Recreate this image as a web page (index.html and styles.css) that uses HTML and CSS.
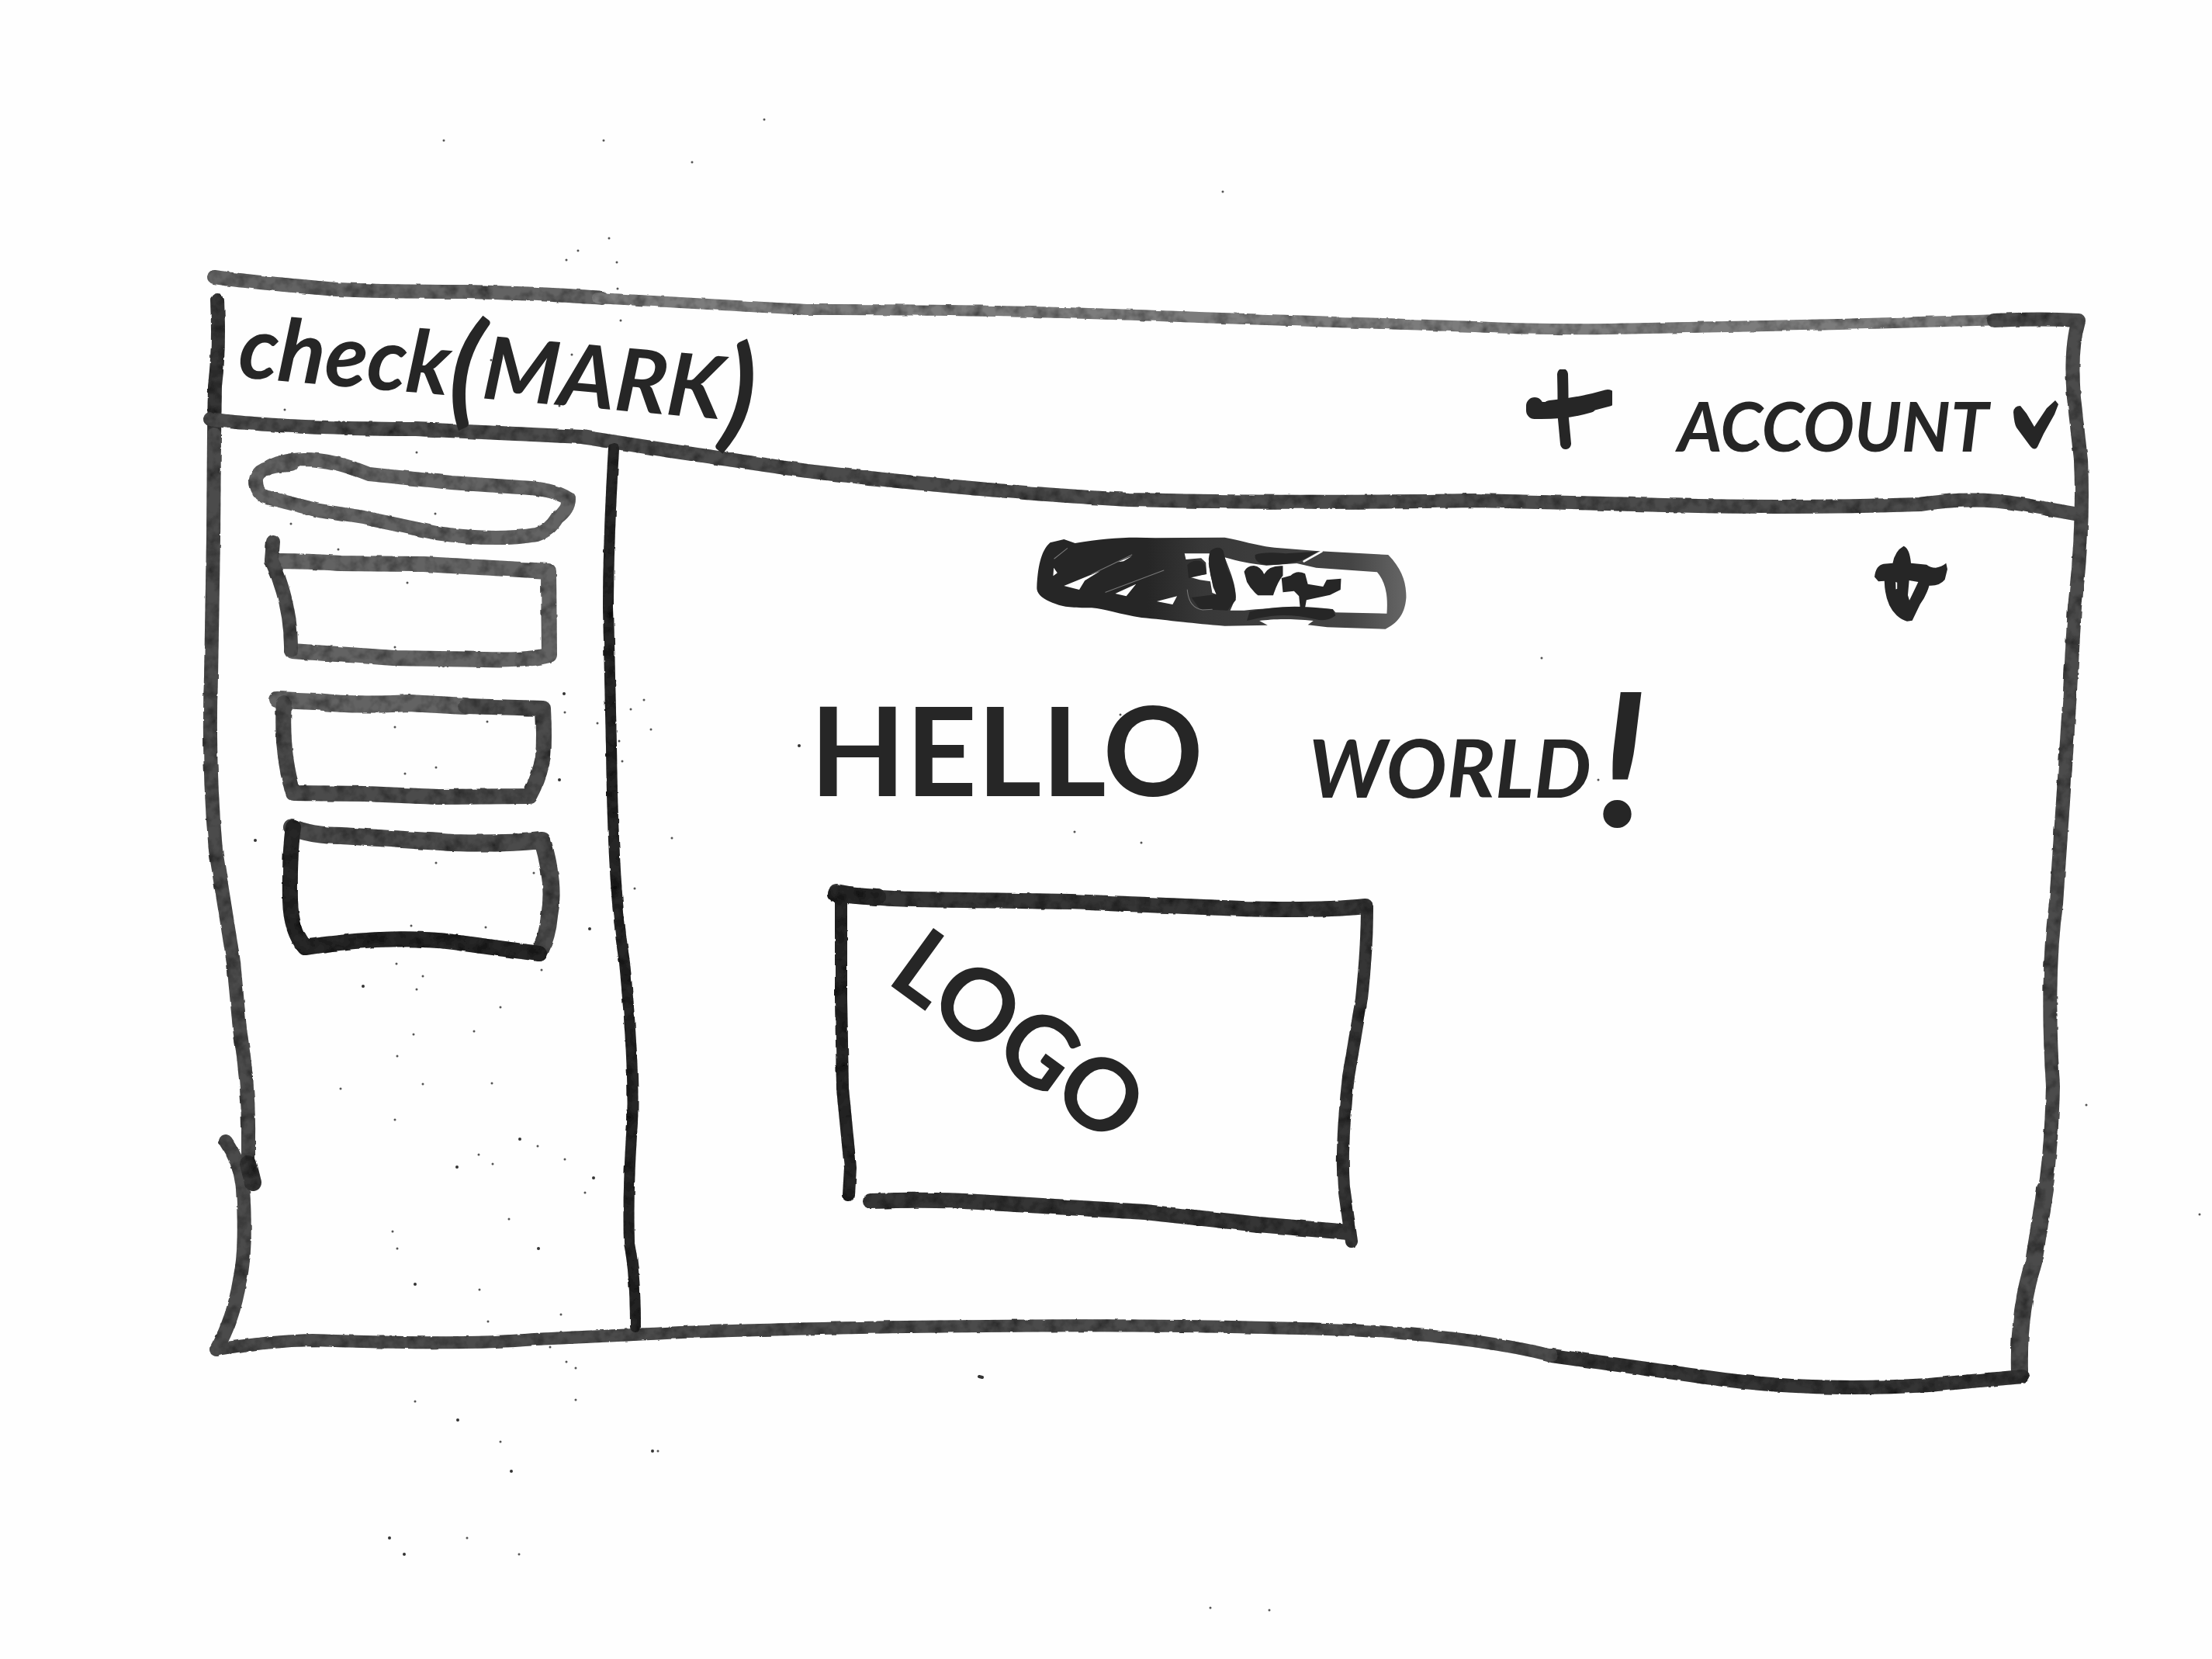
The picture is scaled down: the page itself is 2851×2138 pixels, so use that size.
FILE: index.html
```
<!DOCTYPE html>
<html lang="en">
<head>
<meta charset="utf-8">
<meta name="viewport" content="width=device-width, initial-scale=1">
<title>check(MARK)</title>
<link rel="stylesheet" href="styles.css">
</head>
<body>
<!-- paper grain -->
<svg class="specks" viewBox="0 0 2851 2138" preserveAspectRatio="none" aria-hidden="true">
  <path class="speck" d="M778 181h0M985 154h0M892 209h0M1576 247h0M785 307h0M745 323h0M730 335h0M796 372h0M800 413h0M795 338h0M848 1870h0M633 464h0M737 457h0M721 523h0M367 528h0M537 583h0M561 662h0M375 675h0M436 708h0M525 751h0M509 834h0M728 918h0M770 932h0M628 930h0M830 902h0M813 914h0M839 940h0M798 955h0M802 981h0M509 937h0M562 989h0M522 997h0M562 1112h0M530 1193h0M626 1195h0M688 1125h0M818 1145h0M511 1242h0M545 1258h0M698 1250h0M537 1275h0M645 1298h0M611 1329h0M533 1333h0M512 1361h0M439 1403h0M545 1397h0M634 1396h0M509 1443h0M693 1477h0M617 1488h0M635 1500h0M728 1494h0M754 1537h0M656 1571h0M506 1587h0M512 1609h0M618 1662h0M723 1694h0M629 1703h0M709 1736h0M730 1755h0M742 1763h0M535 1806h0M1385 1072h0M1471 1086h0M1444 921h0M1987 848h0M2060 1005h0M2689 1424h0M645 1858h0M602 1982h0M742 1804h0M1560 2072h0M1636 2075h0M2835 1565h0M669 2003h0M572 181h0M866 1080h0"/>
  <path class="speck speck--large" d="M329 1083h0M727 894h0M721 1005h0M760 1197h0M468 1271h0M670 1468h0M589 1504h0M765 1518h0M694 1609h0M535 1655h0M1030 961h0M841 1870h0M659 1896h0M502 1982h0M521 2003h0M590 1830h0M1262 1774l4 1"/>
</svg>

<div class="window">
  <svg class="ink" viewBox="264 352 2427 1440" preserveAspectRatio="none" aria-hidden="true">
    <defs>
      <filter id="marker" filterUnits="userSpaceOnUse" x="200" y="300" width="2600" height="1600">
        <feTurbulence type="fractalNoise" baseFrequency="0.06" numOctaves="3" seed="4" result="n"/>
        <feDisplacementMap in="SourceGraphic" in2="n" scale="3" xChannelSelector="R" yChannelSelector="G" result="edge"/>
        <feColorMatrix in="n" values="0 0 0 0 0  0 0 0 0 0  0 0 0 0 0  1.4 0 0 0 -0.55" result="shade"/>
        <feComposite in="shade" in2="edge" operator="in" result="mottle"/>
        <feMerge><feMergeNode in="edge"/><feMergeNode in="mottle"/></feMerge>
      </filter>
    </defs>
    <g filter="url(#marker)">
      <path class="s18 pale" d="M276 357Q316 363 434 373Q500 376 597 376Q700 378 776 384"/>
      <path class="s14 faint" d="M770 384Q903 391 1040 399Q1273 398 1545 409L1900 421Q1980 425 2073 424L2371 418L2580 412"/>
      <path class="s18 mid" d="M2570 413Q2630 410 2679 413Q2668 450 2673 513L2682 593Q2686 680 2674 782"/>
      <path class="s18 mid" d="M2674 782Q2668 900 2660 1018L2650 1164Q2637 1260 2646 1400Q2644 1480 2636 1533"/>
      <path class="s22 mid" d="M2636 1533L2621 1627Q2601 1690 2603 1767"/>
      <path class="s18 dark" d="M2607 1774L2486 1785Q2330 1794 2200 1775L2000 1747"/>
      <path class="s16 mid" d="M2000 1747Q1900 1722 1740 1714Q1500 1706 1273 1709Q1091 1710 880 1717L689 1726Q600 1734 403 1727Q350 1728 279 1739"/>
      <path class="s18 dark" d="M280 387Q283 450 277 497L276 563"/>
      <path class="s18 mid" d="M276 560L275 694L272 872Q268 984 278 1096L301 1240L309 1326Q321 1400 320 1464L320 1500"/>
      <path class="s18 mid" d="M291 1471Q311 1500 313 1533Q318 1610 309 1650Q301 1700 279 1739"/>
      <path class="s22 dark" d="M320 1500L326 1524"/>
      <path class="s18 mid" d="M271 540Q300 545 393 550Q460 553 536 553L750 563L878 583L1040 607Q1273 634 1455 644Q1660 649 1900 645L2109 650Q2300 656 2475 650Q2543 639 2606 650L2674 662"/>
      <path class="s14 black" d="M791 578Q784 700 784 783L788 962Q790 1150 805 1240Q818 1378 815 1447Q809 1533 811 1602Q819 1640 819 1710"/>
    </g>
  </svg>

  <header class="topbar">
    <a class="brand" href="#">check<span class="brand__paren">(</span>MARK<span class="brand__paren">)</span></a>
    <nav class="actions">
      <button class="plain" type="button" aria-label="Add">
        <svg class="icon-plus" viewBox="1964 477 116 104" aria-hidden="true">
          <path class="s14 black" d="M2016 483Q2017 520 2016 530L2020 573"/>
          <path class="s22 black" d="M1980 524L1980 530Q2020 531 2050 522M2000 528Q2040 524 2074 514"/>
        </svg>
      </button>
      <button class="plain account" type="button">ACCOUNT
        <svg class="icon-caret" viewBox="2597 532 60 64" aria-hidden="true">
          <path class="fill" d="M2606 539Q2598 539 2597 547Q2598 562 2601 567L2618 590Q2624 598 2628 592L2636 575L2650 550L2655 537L2651 532L2640 542L2624 566L2614 549Z"/>
        </svg>
      </button>
    </nav>
  </header>

  <div class="body">
    <aside class="sidebar">
      <label class="search">
        <input class="search__input" type="search" aria-label="Search">
        <svg class="ink" viewBox="320 592 424 100" preserveAspectRatio="none" aria-hidden="true">
          <path class="s18 pale" filter="url(#marker)" d="M376 599Q332 600 330 618Q330 638 345 641L412 658L470 667L565 687Q640 698 695 689Q712 684 722 667Q737 656 737 643Q720 632 688 629L584 622L477 611Q430 592 393 592Q360 593 345 604"/>
        </svg>
      </label>
      <button class="card" type="button" aria-label="Item 1">
        <svg class="ink" viewBox="352 724 356 124" preserveAspectRatio="none" aria-hidden="true">
          <g filter="url(#marker)"><path class="s20 pale" d="M351 723Q400 723 439 726L546 727L707 736L708 844Q680 852 623 850L508 848L376 839"/><path class="s18 mid" d="M352 698L350 722Q376 780 375 838"/></g>
        </svg>
      </button>
      <button class="card" type="button" aria-label="Item 2">
        <svg class="ink" viewBox="352 904 356 124" preserveAspectRatio="none" aria-hidden="true">
          <g filter="url(#marker)"><path class="s22 pale" d="M357 902L408 904Q454 910 527 906L600 910"/><path class="s20 mid" d="M600 910L700 913Q702 950 700 975Q696 1000 682 1026L565 1027L470 1023L378 1022Q362 970 366 906"/></g>
        </svg>
      </button>
      <button class="card" type="button" aria-label="Item 3">
        <svg class="ink" viewBox="352 1084 356 124" preserveAspectRatio="none" aria-hidden="true">
          <g filter="url(#marker)"><path class="s22 mid" d="M376 1066Q400 1077 440 1077L584 1086Q650 1088 699 1083Q716 1140 708 1180Q706 1206 695 1228"/><path class="s20 black" d="M378 1066Q373 1100 374 1160Q375 1200 393 1221Q500 1204 584 1214L695 1229"/></g>
        </svg>
      </button>
    </aside>

    <main class="content">
      <div class="toolbar">
        <label class="toggle">
          <input class="toggle__input" type="checkbox" aria-label="Preview" checked>
          <svg class="toggle__art" viewBox="101 96 1344 360" preserveAspectRatio="none" aria-hidden="true">
            <defs><linearGradient id="ring"><stop offset="0.3" stop-color="#262626"/><stop offset="0.45" stop-color="#383838"/><stop offset="0.85" stop-color="#454545"/><stop offset="1" stop-color="#666"/></linearGradient></defs>
            <path fill="url(#ring)" fill-rule="evenodd" d="M150 118L200 105L240 120C350 100 430 95 530 100L780 98C860 115 900 130 960 137L1110 150L1370 165C1420 220 1435 270 1435 330C1430 400 1400 430 1360 452L1150 445L1080 436L1100 420C1000 410 950 415 905 420L935 437L780 440C650 430 560 415 480 408C400 395 350 375 300 370C230 370 200 368 170 355C130 340 100 320 102 290C105 220 115 150 150 118ZM780 175C830 190 870 200 930 206L1040 198L1110 215L1330 232C1360 270 1370 320 1365 392L1180 388L1170 375C1060 365 930 370 850 380L800 380L820 330C820 280 800 230 780 175ZM635 160L725 160L722 200L738 290L750 318L735 312L728 268L690 262L650 250L715 240L712 195L695 178L640 183ZM200 285L330 228L275 265L255 300ZM385 315L460 278L425 325ZM535 345L608 325L592 357ZM163 215L176 235L161 247ZM395 193L445 170L415 190Z"/>
            <path class="fill" d="M850 230Q860 207 885 207Q910 210 922 240Q940 205 990 208L990 245Q970 270 955 322L900 322Q875 300 860 270ZM985 255L1018 245Q1040 222 1070 238L1080 278L1135 288L1148 262L1200 257L1198 300L1160 320L1075 340L1070 370L1052 368L1048 325L1030 305L990 310ZM890 165Q920 152 1000 160L1115 152L1070 180Q1030 202 930 205Q885 195 890 165ZM870 385Q1000 350 1170 376L1180 400Q1150 425 1110 415Q1000 385 900 410L860 420ZM728 150Q760 125 775 150L790 220Q820 280 820 340L790 380L690 375L660 330L750 318Q722 240 722 180ZM645 205Q665 180 695 190Q715 200 712 240L650 255Z"/>
            <path class="scratch" d="M165 180L212 140M645 300Q650 370 700 378L735 376M300 240L445 165M350 310L560 225"/>
            <path class="scratch scratch--wide" d="M1066 190L1130 152"/>
          </svg>
        </label>
        <button class="plain favourite" type="button" aria-label="Favourite">
          <svg class="icon-heart" viewBox="108 74 284 292" aria-hidden="true">
            <path class="fill" fill-rule="evenodd" d="M110 195Q115 150 145 145L180 142Q188 95 222 76Q245 85 250 142L310 148Q325 160 345 160Q370 155 385 142L390 165L380 205Q360 230 320 228Q310 265 285 300L255 362L235 365Q215 360 195 342Q150 300 148 210L125 212ZM243 208L278 214L244 285L238 265ZM191 214L197 216L197 240L192 242Z"/>
          </svg>
        </button>
      </div>
      <h1 class="headline">HELLO <span class="headline__small">WORLD</span><span class="headline__mark">!</span></h1>
      <figure class="logo">
        <svg class="ink" viewBox="1068 1140 704 468" preserveAspectRatio="none" aria-hidden="true">
          <g filter="url(#marker)">
            <path class="s20 dark" d="M1078 1149Q1120 1158 1180 1159L1379 1162L1600 1171Q1700 1174 1760 1168"/>
            <path class="s16 black" d="M1084 1152L1084 1287L1086 1403L1096 1505L1094 1540"/>
            <path class="s22 black" d="M1078 1152L1130 1156"/>
            <path class="s20 dark" d="M1122 1548Q1200 1545 1260 1549L1476 1562L1622 1578L1738 1588"/>
            <path class="s16 dark" d="M1762 1170Q1762 1220 1755 1287L1738 1387Q1728 1480 1732 1530L1742 1600"/>
          </g>
        </svg>
        <figcaption class="logo__text">LOGO</figcaption>
      </figure>
    </main>
  </div>
</div>
</body>
</html>
```
FILE: styles.css
```
* { box-sizing: border-box; }

body {
  position: relative;
  margin: 0;
  padding: 352px 160px 346px 264px;
  background: #fefefe;
  color: #262626;
  font-family: Lato, "Open Sans", sans-serif;
  font-weight: 700;
}

/* marker strokes */
path { fill: none; stroke-linecap: round; stroke-linejoin: round; }
.fill { fill: #262626; }
.toggle__art path:first-of-type { fill: url(#ring); }
.s14 { stroke-width: 14px; }
.s16 { stroke-width: 16px; }
.s18 { stroke-width: 18px; }
.s20 { stroke-width: 20px; }
.s22 { stroke-width: 22px; }
.black { stroke: #262626; }
.dark { stroke: #363636; }
.mid { stroke: #4c4c4c; }
.pale { stroke: #646464; }
.faint { stroke: #7c7c7c; }
.speck { stroke: #555; stroke-width: 3px; }
.speck--large { stroke: #333; stroke-width: 4px; }
.scratch { stroke: #777; stroke-width: 3px; }
.scratch--wide { stroke: #fefefe; stroke-width: 8px; }

.specks,
.ink {
  position: absolute;
  inset: 0;
  width: 100%;
  height: 100%;
  overflow: visible;
  pointer-events: none;
}

.window {
  position: relative;
  display: flex;
  flex-direction: column;
}

.plain {
  padding: 0;
  border: 0;
  background: none;
  color: inherit;
  font: inherit;
}

svg { display: block; }

/* top bar */
.topbar {
  display: flex;
  justify-content: space-between;
  height: 240px;
  padding: 40px 36px 4px 44px;
}
.brand {
  display: flex;
  align-items: center;
  align-self: flex-start;
  color: inherit;
  font-size: 112px;
  font-style: italic;
  line-height: 160px;
  text-decoration: none;
  transform: rotate(5deg);
}
.brand__paren { font-size: 160px; }
.actions {
  display: flex;
  align-items: flex-end;
  gap: 84px;
}
.icon-plus { width: 116px; height: 104px; margin-bottom: 8px; }
.account {
  display: flex;
  align-items: center;
  gap: 32px;
  font-size: 88px;
  font-style: italic;
  line-height: 80px;
}
.icon-caret { width: 60px; height: 64px; }

/* sidebar */
.body { display: flex; }
.sidebar {
  display: flex;
  flex: 0 0 536px;
  flex-direction: column;
  gap: 56px;
  padding: 0 92px 0 88px;
}
.search {
  position: relative;
  height: 100px;
  margin: 0 -32px -24px;
}
.search__input {
  width: 100%;
  height: 100%;
  padding: 0 40px;
  border: 0;
  border-radius: 50px;
  background: none;
  font: inherit;
  font-size: 32px;
  outline: 0;
}
.card {
  position: relative;
  height: 124px;
  padding: 0;
  border: 0;
  background: none;
}

/* main area */
.content {
  flex: 1;
  min-width: 0;
  padding: 100px 180px 184px 268px;
}
.toolbar {
  display: flex;
  align-items: center;
  justify-content: space-between;
  padding-left: 268px;
}
.toggle { position: relative; }
.toggle__input {
  position: absolute;
  inset: 0;
  width: 100%;
  height: 100%;
  margin: 0;
  opacity: 0;
}
.toggle__art { width: 480px; height: 120px; }
.icon-heart { width: 96px; height: 98px; }
.headline {
  display: flex;
  align-items: center;
  height: 200px;
  margin: 52px 0 76px -24px;
  font-size: 160px;
  line-height: 200px;
}
.headline__small {
  margin-left: 136px;
  padding-top: 48px;
  font-size: 104px;
  font-style: italic;
}
.headline__mark {
  margin-left: 8px;
  padding-top: 16px;
  font-size: 240px;
  font-style: italic;
}
.logo {
  position: relative;
  width: 704px;
  height: 468px;
  margin: 0;
}
.logo__text {
  width: 440px;
  padding: 96px 0 0 108px;
  font-size: 128px;
  line-height: 128px;
  transform: rotate(36deg);
}
```
